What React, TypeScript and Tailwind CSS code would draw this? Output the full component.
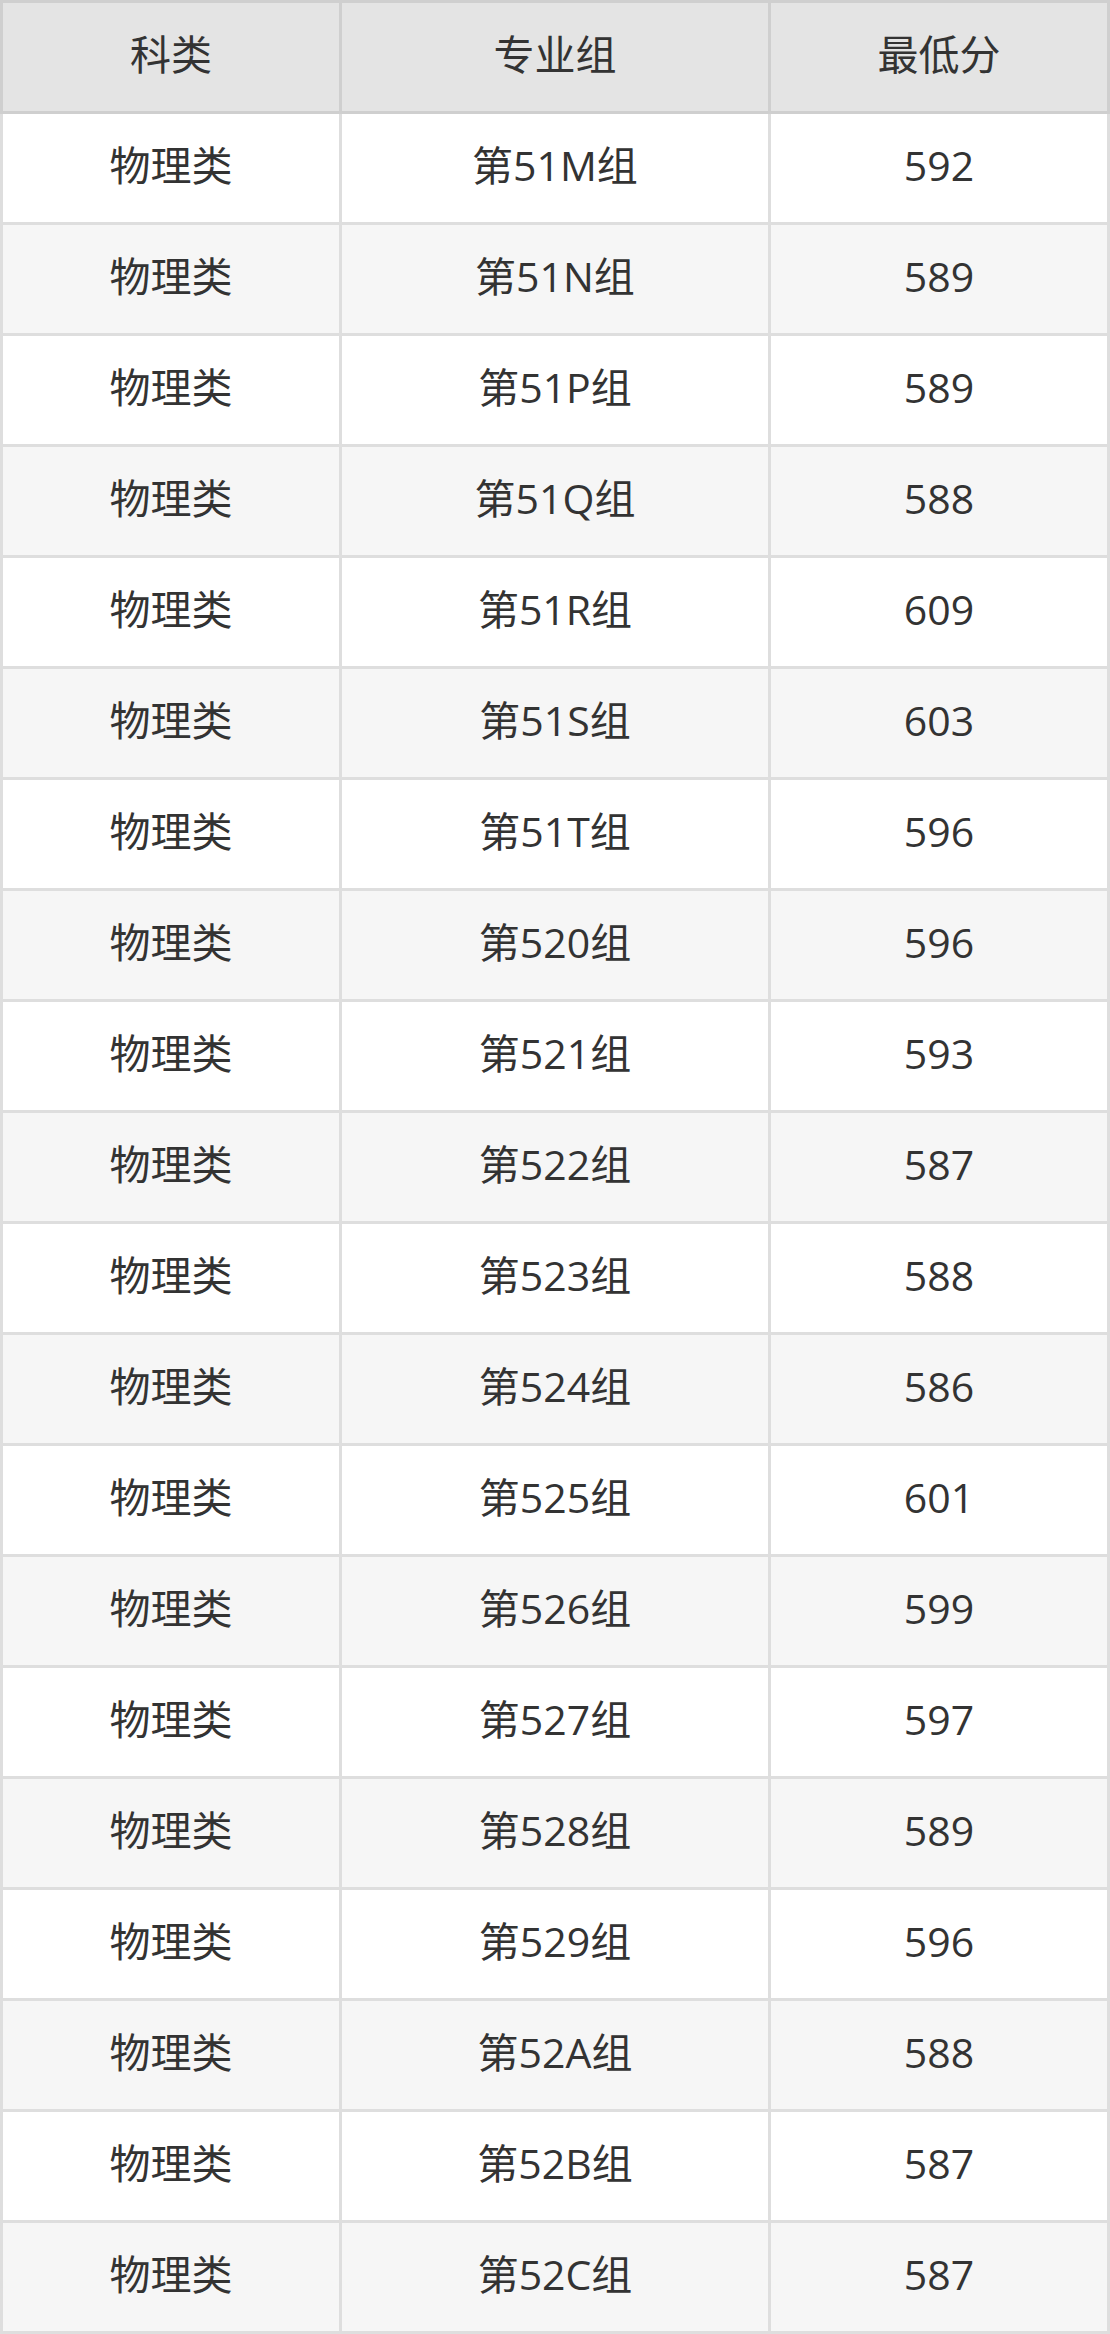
import React from "react";

const rows: [string, string, string][] = [
  ["物理类", "第51M组", "592"],
  ["物理类", "第51N组", "589"],
  ["物理类", "第51P组", "589"],
  ["物理类", "第51Q组", "588"],
  ["物理类", "第51R组", "609"],
  ["物理类", "第51S组", "603"],
  ["物理类", "第51T组", "596"],
  ["物理类", "第520组", "596"],
  ["物理类", "第521组", "593"],
  ["物理类", "第522组", "587"],
  ["物理类", "第523组", "588"],
  ["物理类", "第524组", "586"],
  ["物理类", "第525组", "601"],
  ["物理类", "第526组", "599"],
  ["物理类", "第527组", "597"],
  ["物理类", "第528组", "589"],
  ["物理类", "第529组", "596"],
  ["物理类", "第52A组", "588"],
  ["物理类", "第52B组", "587"],
  ["物理类", "第52C组", "587"],
];

const App = () => {
  return (
    <div className="w-[1110px] bg-white font-['Open_Sans','Noto_Sans_CJK_SC',sans-serif] text-[#333333]">
      <table className="w-[1110px] table-fixed border-collapse text-center text-[41px]">
        <colgroup>
          <col className="w-[339px]" />
          <col className="w-[429px]" />
          <col className="w-[339px]" />
        </colgroup>
        <thead>
          <tr className="bg-[#e4e4e4]">
            <th className="h-[111px] border-[3px] border-[#cfcfcf] p-0 pb-[5px] font-normal leading-none">科类</th>
            <th className="h-[111px] border-[3px] border-[#cfcfcf] p-0 pb-[5px] font-normal leading-none">专业组</th>
            <th className="h-[111px] border-[3px] border-[#cfcfcf] p-0 pb-[5px] font-normal leading-none">最低分</th>
          </tr>
        </thead>
        <tbody>
          {rows.map((row, i) => (
            <tr key={i} className={i % 2 === 1 ? "bg-[#f6f6f6]" : "bg-white"}>
              {row.map((cell, j) => (
                <td key={j} className="h-[111px] border-[3px] border-[#dedede] p-0 pb-[5px] leading-none">
                  {cell}
                </td>
              ))}
            </tr>
          ))}
        </tbody>
      </table>
    </div>
  );
};

export default App;
